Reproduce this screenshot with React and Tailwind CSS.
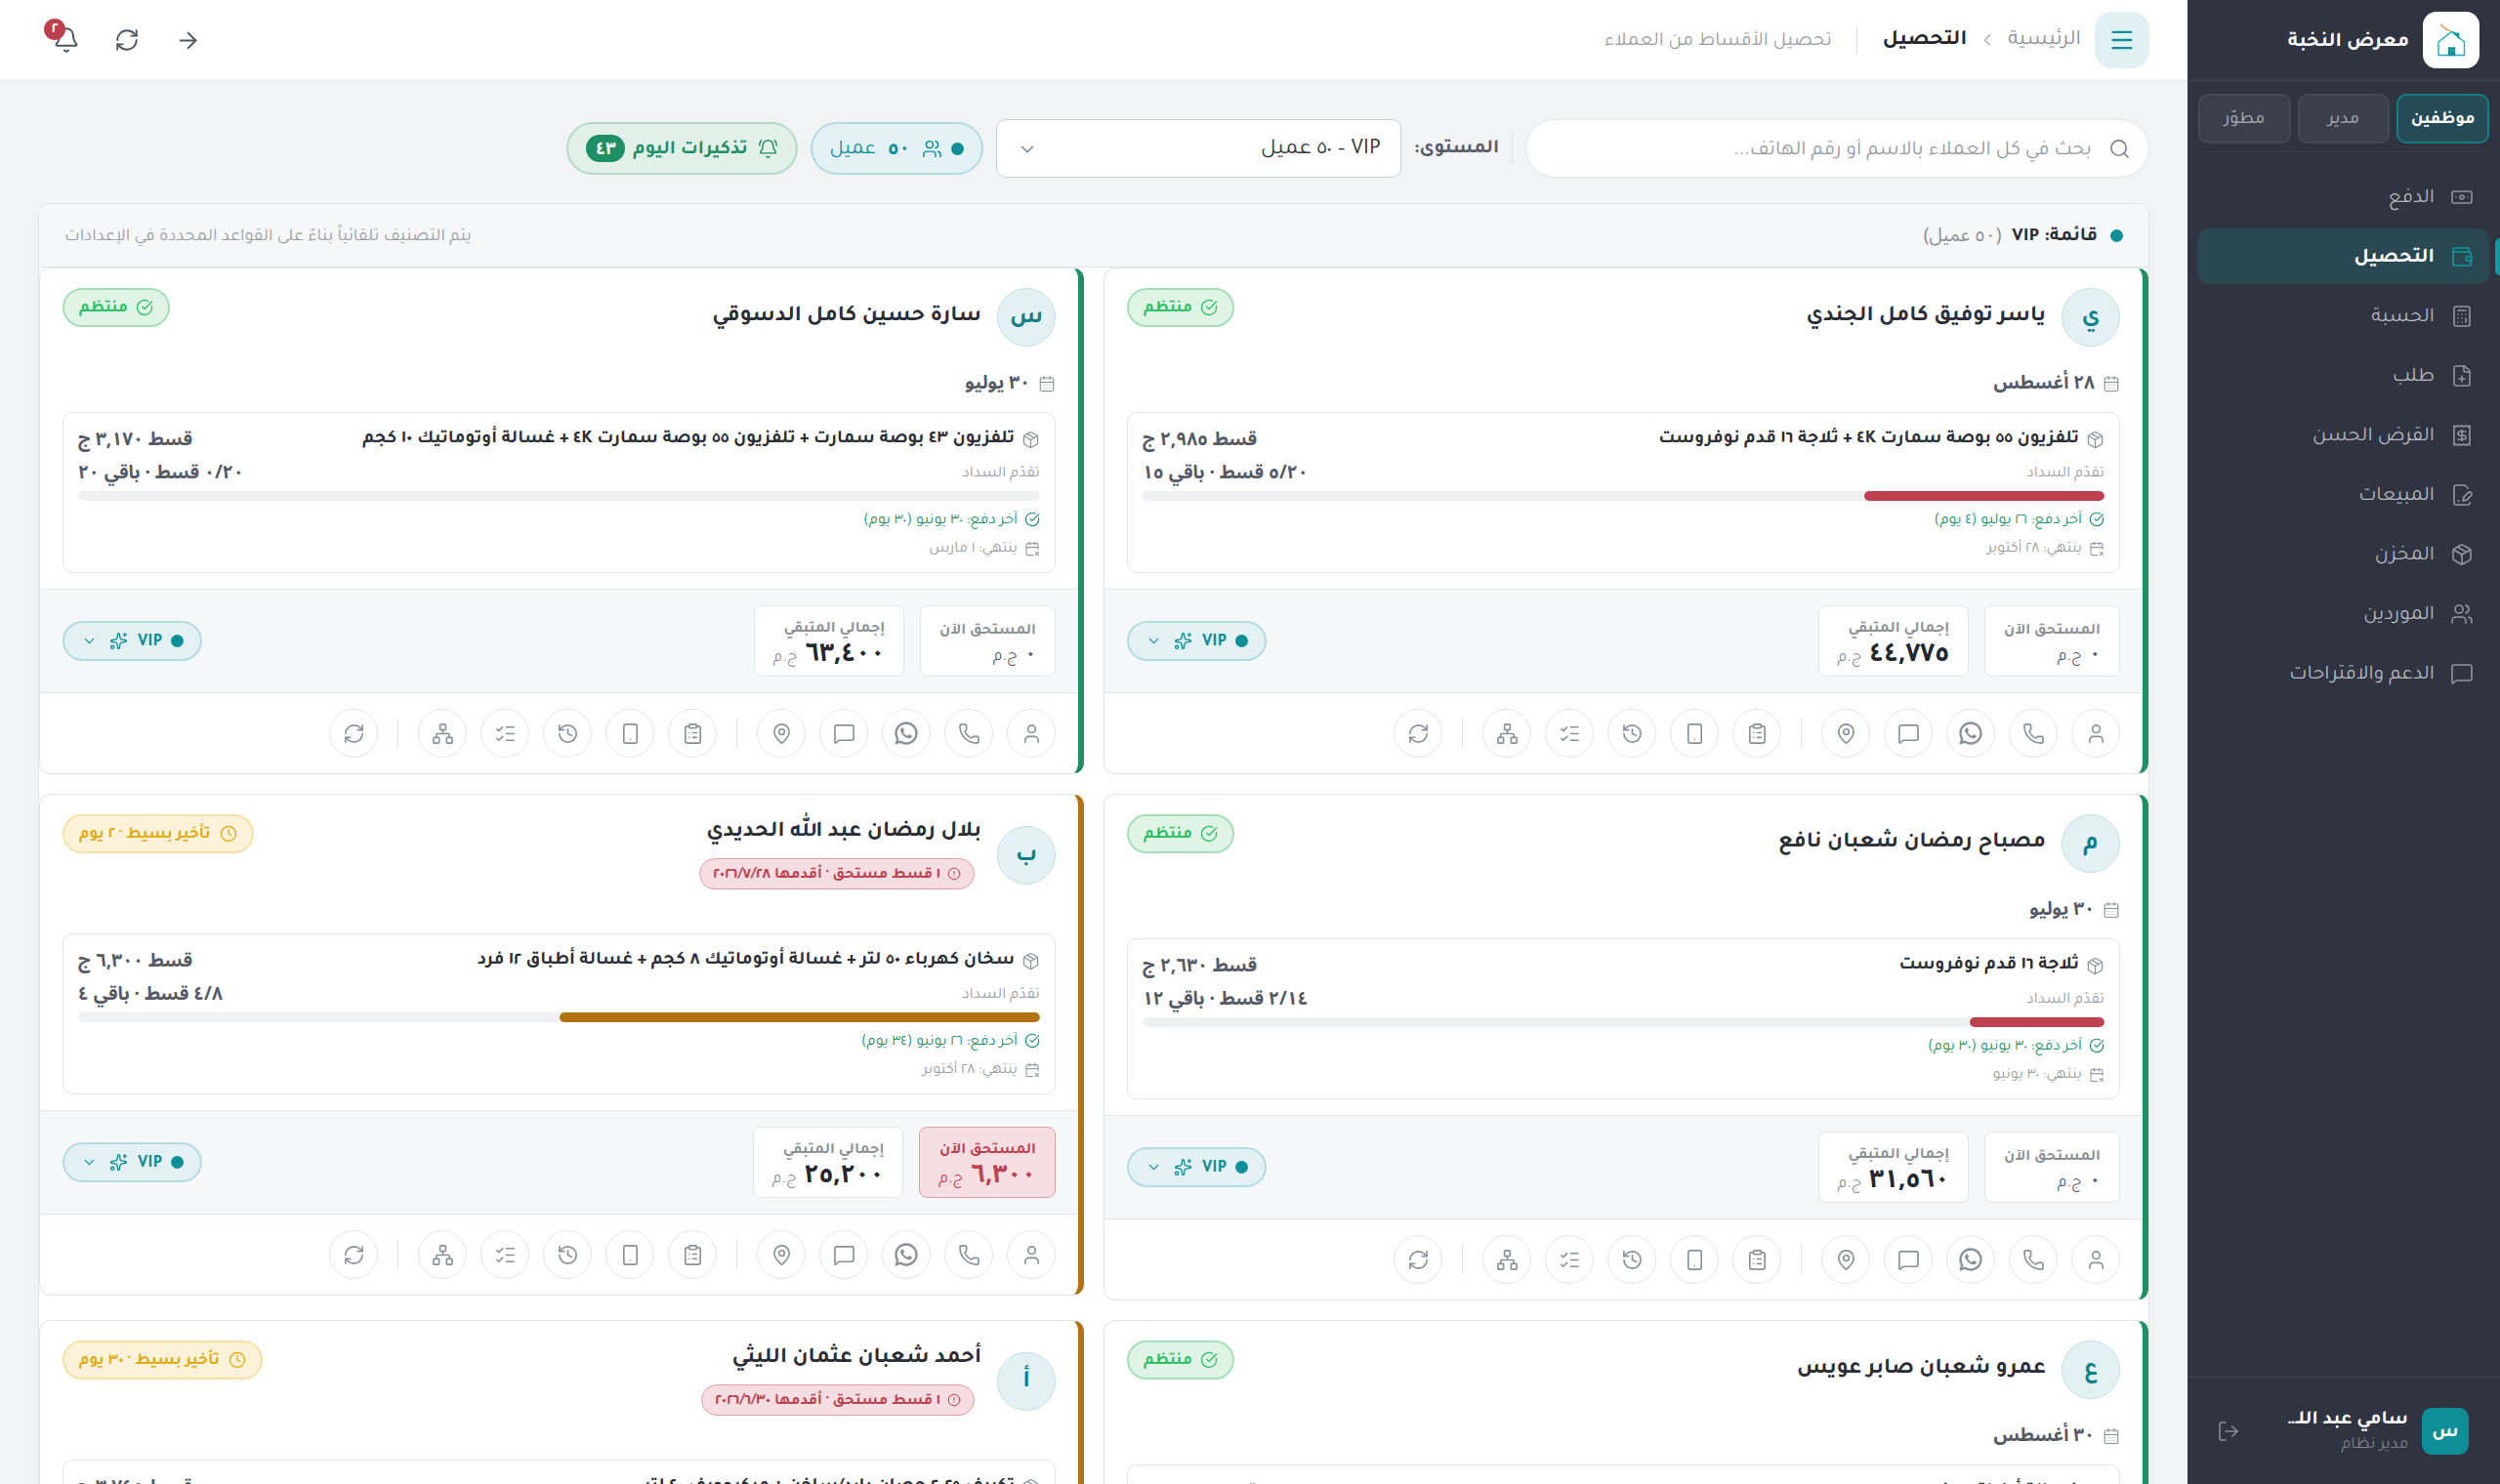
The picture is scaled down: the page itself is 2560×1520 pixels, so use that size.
import {
  ArrowRight, Banknote, Bell, BellRing, Calculator, CalendarDays, CalendarX2, ChevronDown, ChevronLeft,
  CircleAlert, CircleCheckBig, ClipboardList, Clock, FilePenLine, FilePlus, History, ListChecks, LogOut,
  MapPin, Menu, MessageSquare, Network, Package, Phone, Receipt, RefreshCw, Search, Smartphone, Sparkles,
  User, Users, Wallet,
} from 'lucide-react';
import { RiWhatsappLine } from 'react-icons/ri';

const NAV = [
  { label: 'الدفع', icon: Banknote },
  { label: 'التحصيل', icon: Wallet, active: true },
  { label: 'الحسبة', icon: Calculator },
  { label: 'طلب', icon: FilePlus },
  { label: 'القرض الحسن', icon: Receipt },
  { label: 'المبيعات', icon: FilePenLine },
  { label: 'المخزن', icon: Package },
  { label: 'الموردين', icon: Users },
  { label: 'الدعم والاقتراحات', icon: MessageSquare },
];

const ROLES = ['موظفين', 'مدير', 'مطوّر'];

const CLIENTS = [
  {
    id: 1, name: 'ياسر توفيق كامل الجندي', initial: 'ي', tone: 'ok', status: 'منتظم', date: '٢٨ أغسطس',
    items: 'تلفزيون ٥٥ بوصة سمارت ٤K + ثلاجة ١٦ قدم نوفروست', installment: '٢,٩٨٥', progress: '٥/٢٠ قسط · باقي ١٥',
    percent: 25, lastPaid: '٢٦ يوليو (٤ يوم)', ends: '٢٨ أكتوبر', due: '٠', remaining: '٤٤,٧٧٥',
  },
  {
    id: 2, name: 'سارة حسين كامل الدسوقي', initial: 'س', tone: 'ok', status: 'منتظم', date: '٣٠ يوليو',
    items: 'تلفزيون ٤٣ بوصة سمارت + تلفزيون ٥٥ بوصة سمارت ٤K + غسالة أوتوماتيك ١٠ كجم', installment: '٣,١٧٠', progress: '٠/٢٠ قسط · باقي ٢٠',
    percent: 0, lastPaid: '٣٠ يونيو (٣٠ يوم)', ends: '١ مارس', due: '٠', remaining: '٦٣,٤٠٠',
  },
  {
    id: 3, name: 'مصباح رمضان شعبان نافع', initial: 'م', tone: 'ok', status: 'منتظم', date: '٣٠ يوليو',
    items: 'ثلاجة ١٦ قدم نوفروست', installment: '٢,٦٣٠', progress: '٢/١٤ قسط · باقي ١٢',
    percent: 14, lastPaid: '٣٠ يونيو (٣٠ يوم)', ends: '٣٠ يونيو', due: '٠', remaining: '٣١,٥٦٠',
  },
  {
    id: 4, name: 'بلال رمضان عبد الله الحديدي', initial: 'ب', tone: 'late', status: 'تأخير بسيط · ٢ يوم', overdue: '١ قسط مستحق · أقدمها ٢٠٢٦/٧/٢٨',
    items: 'سخان كهرباء ٥٠ لتر + غسالة أوتوماتيك ٨ كجم + غسالة أطباق ١٢ فرد', installment: '٦,٣٠٠', progress: '٤/٨ قسط · باقي ٤',
    percent: 50, lastPaid: '٢٦ يونيو (٣٤ يوم)', ends: '٢٨ أكتوبر', due: '٦,٣٠٠', remaining: '٢٥,٢٠٠',
  },
  {
    id: 5, name: 'عمرو شعبان صابر عويس', initial: 'ع', tone: 'ok', status: 'منتظم', date: '٣٠ أغسطس',
    items: 'غسالة أطباق ١٢ فرد', installment: '٢,٤٥٠', progress: '٣/١٢ قسط · باقي ٩',
    percent: 25, lastPaid: '٣٠ يوليو (١ يوم)', ends: '٣٠ أبريل', due: '٠', remaining: '٢٢,٠٥٠',
  },
  {
    id: 6, name: 'أحمد شعبان عثمان الليثي', initial: 'أ', tone: 'late', status: 'تأخير بسيط · ٣٠ يوم', overdue: '١ قسط مستحق · أقدمها ٢٠٢٦/٦/٣٠',
    items: 'تكييف ٢.٢٥ حصان بارد/ساخن + ميكروويف ٤٠ لتر', installment: '٣,٧٤٥', progress: '٤/١٠ قسط · باقي ٦',
    percent: 40, lastPaid: '٣٠ مايو (٦١ يوم)', ends: '٣٠ ديسمبر', due: '٣,٧٤٥', remaining: '٢٢,٤٧٠',
  },
];

const ACTIONS = [
  [
    { label: 'الملف', icon: User },
    { label: 'اتصال', icon: Phone },
    { label: 'واتساب', icon: RiWhatsappLine, filled: true },
    { label: 'رسالة', icon: MessageSquare },
    { label: 'الموقع', icon: MapPin },
  ],
  [
    { label: 'الأقساط', icon: ClipboardList },
    { label: 'الجهاز', icon: Smartphone },
    { label: 'السجل', icon: History },
    { label: 'المهام', icon: ListChecks },
    { label: 'الضامنين', icon: Network },
  ],
  [{ label: 'تحديث', icon: RefreshCw }],
];

const NUM = "font-['Noto_Sans_Arabic','DejaVu_Sans',sans-serif]";

function Logo() {
  return (
    <span className="flex size-[58px] shrink-0 items-center justify-center rounded-[14px] bg-white">
      <svg viewBox="0 0 32 36" className="h-9 w-8" fill="none" stroke="#16aebd" strokeWidth="1.4">
        <path d="M3 33.500V20L16.500 9.500L29.500 20V33.500Z" />
        <path d="M5 1.500C8 6 12 7.500 16.500 9.500" stroke="#d9a35c" />
        <path d="M16.500 9.500L24 12.500" />
        <path d="M20.500 11.500h3v4z" fill="#0e8f98" stroke="#0e8f98" />
        <rect x="13.500" y="26" width="6" height="7.500" fill="#0e8f98" stroke="#0e8f98" />
        <path d="M15 28.500h1M17.500 28.500h1" stroke="#8fd6dc" />
      </svg>
    </span>
  );
}

function Sidebar() {
  return (
    <aside className="flex w-80 shrink-0 flex-col bg-[#303440]">
      <div className="flex h-[83px] items-center gap-[14px] border-b border-[#424652] px-[21px]">
        <Logo />
        <span className="pt-[6px] text-[21px] font-bold text-white">معرض النخبة</span>
      </div>

      <div className="mx-4 border-b border-[#3c434e] pt-[13px] pb-2">
        <div className="-mx-[5px] grid grid-cols-3 gap-[7px]">
          {ROLES.map((role, i) => (
            <button
              key={role}
              type="button"
              className={
                i === 0
                  ? 'h-[51px] rounded-[10px] border-2 border-[#147d85] bg-[#254b57] pt-1 text-[18px] font-bold text-white'
                  : 'h-[51px] rounded-[10px] border-2 border-[#464a56] bg-[#3b3f4b] pt-1 text-[18px] font-medium text-[#9b9fa8]'
              }
            >
              {role}
            </button>
          ))}
        </div>
      </div>

      <nav className="flex flex-1 flex-col gap-1 px-[11px] pt-[17px]">
        {NAV.map(({ label, icon: Icon, active }) => (
          <a
            key={label}
            href="#"
            className={
              active
                ? 'relative flex h-[57px] items-center gap-4 rounded-[10px] bg-[#2a4852] px-4 text-[21px] font-bold text-white'
                : 'relative flex h-[57px] items-center gap-4 rounded-[10px] px-4 text-[21px] text-[#b4b7be]'
            }
          >
            {active && <span className="absolute -right-[11px] h-[38px] w-[5px] rounded-l-full bg-[#0e9aa0]" />}
            <Icon size={24} strokeWidth={1.6} className={active ? 'text-[#0e9aa0]' : 'text-[#91959f]'} />
            <span className="pt-[5px]">{label}</span>
          </a>
        ))}
      </nav>

      <div className="flex h-[110px] items-center gap-[14px] border-t border-[#424652] pr-8 pl-[26px]">
        <span className="flex size-12 items-center justify-center rounded-[10px] bg-[#0e8f98] pt-1 text-[20px] font-bold text-white">س</span>
        <div className="min-w-0 flex-1 pt-[2px]">
          <p className="w-[130px] truncate text-[20px] leading-7 font-bold text-white">سامي عبد اللطيف محمود</p>
          <p className="text-[17px] leading-6 text-[#7e828c]">مدير نظام</p>
        </div>
        <button type="button" aria-label="خروج" className="flex size-8 items-center justify-center text-[#8b8f99]">
          <LogOut size={24} strokeWidth={1.5} />
        </button>
      </div>
    </aside>
  );
}

function Topbar() {
  return (
    <header className="flex h-[83px] shrink-0 items-center border-b border-[#e1e4e8] bg-white px-[39px]">
      <button type="button" aria-label="القائمة" className="flex h-[58px] w-14 items-center justify-center rounded-[18px] bg-[#e1f0f2] text-[#0e8f98]">
        <Menu size={28} />
      </button>
      <nav className="mr-[14px] flex items-center gap-[11px] text-[22px]">
        <a href="#" className="pt-[3px] text-[#8b8f96]">الرئيسية</a>
        <ChevronLeft size={20} strokeWidth={1.5} className="text-[#a5a8ae]" />
        <span className="pt-[3px] font-bold text-[#24272e]">التحصيل</span>
      </nav>
      <p className="mr-[26px] flex h-[30px] items-center border-r border-[#dcdfe3] pt-1 pr-[25px] text-[20px] text-[#9a9da3]">تحصيل الأقساط من العملاء</p>
      <div className="mr-auto ml-[5px] flex items-center gap-[14px] text-[#50545e]">
        <button type="button" aria-label="رجوع" className="flex size-12 items-center justify-center"><ArrowRight size={27} strokeWidth={1.7} /></button>
        <button type="button" aria-label="تحديث" className="flex size-12 items-center justify-center"><RefreshCw size={26} strokeWidth={1.7} /></button>
        <button type="button" aria-label="الإشعارات" className="relative flex size-12 items-center justify-center">
          <Bell size={28} strokeWidth={1.7} />
          <span className="absolute top-[2px] left-px flex size-[22px] items-center justify-center rounded-full bg-[#bc404e] pt-[2px] text-[16px] leading-none font-bold text-white">٢</span>
        </button>
      </div>
    </header>
  );
}

function Toolbar() {
  return (
    <div className="flex items-center">
      <div className="relative w-[639px]">
        <Search size={23} strokeWidth={1.7} className="absolute top-[19px] right-[19px] text-[#7f838a]" />
        <input
          type="search"
          aria-label="بحث"
          placeholder="بحث في كل العملاء بالاسم أو رقم الهاتف..."
          className="h-[60px] w-full rounded-full border border-[#dfe2e6] bg-white pt-1 pr-[58px] pl-6 text-[21px] text-[#24272e] placeholder:text-[#96999f]"
        />
      </div>
      <span className="mr-[13px] ml-[13px] h-[33px] w-px bg-[#dcdfe3]" />
      <label htmlFor="level" className="ml-[13px] pt-[2px] text-[20px] font-bold text-[#565a66]">المستوى:</label>
      <div className="relative w-[415px]">
        <select id="level" className="h-[60px] w-full appearance-none rounded-[10px] border border-[#ccd0d6] bg-white pt-1 pr-5 pl-12 text-[23px] text-[#33363e]">
          <option>VIP – ٥٠ عميل</option>
        </select>
        <ChevronDown size={22} strokeWidth={1.7} className="pointer-events-none absolute top-5 left-[21px] text-[#7f838a]" />
      </div>
      <div className="mr-[13px] flex h-[54px] items-center rounded-full border-2 border-[#b3dbe4] bg-[#e4f1f4] px-[18px] text-[21px] text-[#0e8f98]">
        <span className="size-[13px] rounded-full bg-[#0e8f98]" />
        <Users size={21} strokeWidth={1.7} className="mr-[9px] ml-3" />
        <b className={`${NUM} text-[20px]`}>٥٠</b>
        <span className="mr-3 pt-1">عميل</span>
      </div>
      <button type="button" className="mr-[13px] flex h-[54px] items-center rounded-full border-2 border-[#b2dac9] bg-[#e1f0e9] px-[18px] text-[20px] font-bold text-[#1f8f65]">
        <BellRing size={21} strokeWidth={1.7} />
        <span className="mr-[10px] ml-2 pt-1">تذكيرات اليوم</span>
        <span className={`${NUM} flex h-7 w-10 items-center justify-center rounded-full bg-[#1f8f65] text-[18px] leading-none text-white`}>٤٣</span>
      </button>
    </div>
  );
}

function Amount({ label, value, variant }) {
  const box = {
    zero: 'border-[#e1e4e8] bg-white',
    due: 'border-[#dfa0aa] bg-[#f5dde1]',
    total: 'border-[#e1e4e8] bg-white',
  }[variant];
  const text = { zero: 'text-[#565a66]', due: 'text-[#bc404e]', total: 'text-[#24272e]' }[variant];
  return (
    <div className={`flex h-[73px] flex-col justify-center rounded-lg border px-[19px] pt-[6px] ${box}`}>
      <span className={`pt-1 text-[16px] leading-5 font-bold ${variant === 'due' ? 'text-[#bc404e]' : 'text-[#8b8f96]'}`}>{label}</span>
      <span className={`flex items-baseline gap-2 leading-[27px] ${text}`}>
        <b className={variant === 'zero' ? `${NUM} text-[20px]` : `${NUM} text-[26px]`}>{value}</b>
        <span className={variant === 'total' ? 'text-[17px] text-[#8b8f96]' : 'text-[17px]'}>ج.م</span>
      </span>
    </div>
  );
}

function ClientCard({ client }) {
  const late = client.tone === 'late';
  const StatusIcon = late ? Clock : CircleCheckBig;
  return (
    <article className={`rounded-[12px] border border-r-6 border-[#e1e4e8] bg-white ${late ? 'border-r-[#b4720e]' : 'border-r-[#1f8f65]'}`}>
      <div className="flex flex-col px-[23px] pt-5 pb-4">
        <div className="mb-[23px] flex items-start justify-between">
          <div className="flex items-center gap-4">
            <span className="flex size-[60px] items-center justify-center rounded-full border border-[#bfe0e0] bg-[#e4f1f4] pt-1 text-[25px] font-bold text-[#0d7f87]">{client.initial}</span>
            <div>
              <h3 className="text-[23px] leading-[38px] font-bold text-[#2b2e37]">{client.name}</h3>
              {client.overdue && (
                <span className="m-[7px] flex h-8 w-fit items-center gap-[7px] rounded-full border border-[#dfa0aa] bg-[#f5dde1] px-[13px] text-[16px] font-bold text-[#bc404e]">
                  <CircleAlert size={14} strokeWidth={1.7} />
                  <span className="pt-[3px]">{client.overdue}</span>
                </span>
              )}
            </div>
          </div>
          <span
            className={
              late
                ? 'flex h-10 items-center gap-[9px] rounded-full border-2 border-[#f4e2a5] bg-[#fbf2d9] px-[15px] text-[17px] font-bold text-[#e0ab12]'
                : 'flex h-10 items-center gap-2 rounded-full border-2 border-[#a4dfb9] bg-[#dff4e5] px-[15px] text-[17px] font-bold text-[#2cc063]'
            }
          >
            <StatusIcon size={18} strokeWidth={1.7} />
            <span className="pt-[3px]">{client.status}</span>
          </span>
        </div>
        {client.date && (
          <div className={`${NUM} flex h-[29px] items-center gap-2 text-[19px] font-bold text-[#565a66]`}>
            <CalendarDays size={18} strokeWidth={1.5} className="text-[#8b8f96]" />
            <span>{client.date}</span>
          </div>
        )}

        <div className="mt-[15px] rounded-[10px] border border-[#e1e4e8] px-[15px] pt-3 pb-[10px]">
          <div className="flex h-[30px] items-center justify-between">
            <span className="flex items-center gap-[7px] text-[19px] font-bold text-[#2b2e37]">
              <Package size={19} strokeWidth={1.5} className="text-[#8b8f96]" />
              <span className="pt-[3px]">{client.items}</span>
            </span>
            <span className={`${NUM} text-[19px] font-bold text-[#565a66]`}>قسط {client.installment} ج</span>
          </div>
          <div className="mt-[5px] flex h-7 items-center justify-between">
            <span className="pt-1 text-[16px] text-[#9a9da3]">تقدّم السداد</span>
            <span className={`${NUM} text-[19px] font-bold text-[#565a66]`}>{client.progress}</span>
          </div>
          <div className="mt-[5px] h-[10px] overflow-hidden rounded-full bg-[#eef0f1]">
            <div className={`h-full rounded-full ${late ? 'bg-[#b4720e]' : 'bg-[#bf4150]'}`} style={{ width: `${client.percent}%` }} />
          </div>
          <p className="mt-1 flex h-[30px] items-center gap-[7px] text-[16px] text-[#1f8f65]">
            <CircleCheckBig size={16} strokeWidth={1.7} />
            <span className="pt-[3px]">آخر دفع: {client.lastPaid}</span>
          </p>
          <p className="flex h-[29px] items-center gap-[7px] text-[16px] text-[#9a9da3]">
            <CalendarX2 size={16} strokeWidth={1.7} />
            <span className="pt-[3px]">ينتهي: {client.ends}</span>
          </p>
        </div>
      </div>

      <div className="flex items-center justify-between border-y border-[#e1e4e8] bg-[#f6f7f9] px-[23px] py-4">
        <div className="flex gap-4">
          <Amount label="المستحق الآن" value={client.due} variant={late ? 'due' : 'zero'} />
          <Amount label="إجمالي المتبقي" value={client.remaining} variant="total" />
        </div>
        <button type="button" className="flex h-[41px] items-center rounded-full border-2 border-[#b3dbe4] bg-[#e4f1f4] px-[17px] text-[18px] font-bold text-[#0e8f98]">
          <span className="size-[13px] rounded-full bg-[#0e8f98]" />
          <span className="mr-[9px] ml-[10px] pt-[3px]">VIP</span>
          <Sparkles size={19} strokeWidth={1.7} />
          <ChevronDown size={17} strokeWidth={1.7} className="mr-3" />
        </button>
      </div>

      <div className="flex items-center gap-[14px] px-[23px] py-4">
        {ACTIONS.map((group, i) => (
          <div key={i} className="flex items-center gap-[14px]">
            {i > 0 && <span className="mx-[6px] h-[30px] w-px bg-[#dfe2e6]" />}
            {group.map(({ label, icon: Icon, filled }) => (
              <button key={label} type="button" aria-label={label} className="flex size-[50px] items-center justify-center rounded-full border border-[#e1e4e8] text-[#8b8f96]">
                {filled ? <Icon size={28} /> : <Icon size={23} strokeWidth={1.7} />}
              </button>
            ))}
          </div>
        ))}
      </div>
    </article>
  );
}

export default function App() {
  return (
    <div dir="rtl" lang="ar" className="flex h-screen overflow-hidden bg-[#f1f3f5] font-['Tajawal','DejaVu_Sans',sans-serif]">
      <Sidebar />
      <div className="flex min-w-0 flex-1 flex-col">
        <Topbar />
        <main className="flex-1 overflow-hidden px-[39px] pt-[39px]">
          <Toolbar />
          <section className="mt-[26px] overflow-hidden rounded-t-[12px] border border-[#e1e4e8] bg-white">
            <div className="flex h-[65px] items-center justify-between border-b border-[#e1e4e8] bg-[#f6f7f9] px-[26px]">
              <h2 className="flex items-center text-[20px] font-bold text-[#2b2e37]">
                <span className="ml-[13px] size-[13px] rounded-full bg-[#0e8f98]" />
                <span className="pt-1">قائمة: VIP</span>
                <span className={`${NUM} mr-[11px] text-[19px] font-normal text-[#8b8f96]`}>(٥٠ عميل)</span>
              </h2>
              <p className="pt-1 text-[18px] text-[#9a9da3]">يتم التصنيف تلقائياً بناءً على القواعد المحددة في الإعدادات</p>
            </div>
            <div className="grid grid-cols-2 items-start gap-5">
              {CLIENTS.map((client) => (
                <ClientCard key={client.id} client={client} />
              ))}
            </div>
          </section>
        </main>
      </div>
    </div>
  );
}
